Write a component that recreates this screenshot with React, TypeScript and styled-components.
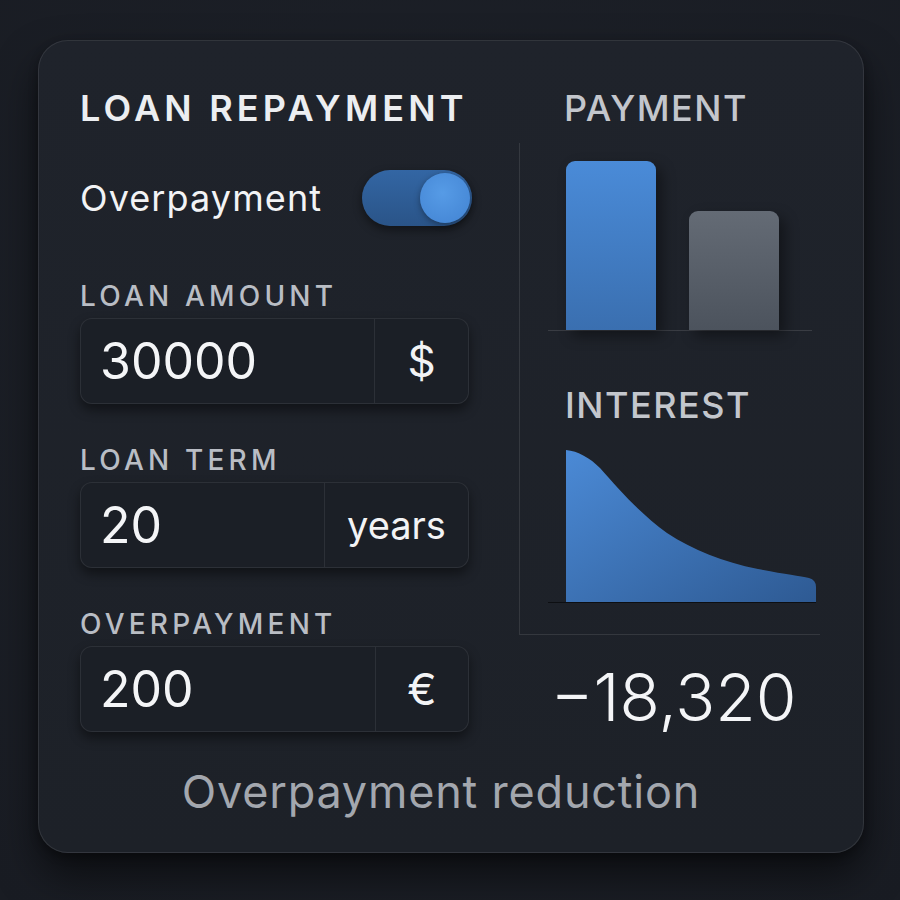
import * as React from 'react';
import styled, { createGlobalStyle } from 'styled-components';

const GlobalStyle = createGlobalStyle`
  html, body {
    margin: 0;
    padding: 0;
    background: #1a1e25;
  }
  body {
    font-family: Inter, "Noto Sans", "Liberation Sans", sans-serif;
    color: #eceef1;
    min-height: 900px;
  }
`;

const Page = styled.div({
  width: '900px',
  height: '900px',
  padding: '40px 36px 0 38px',
  boxSizing: 'border-box',
  background: 'radial-gradient(circle at 50% 40%, #1d2129 0%, #191c23 100%)',
});

const Card = styled.div({
  width: '826px',
  height: '813px',
  boxSizing: 'border-box',
  borderRadius: '30px',
  background: 'linear-gradient(180deg, #1f232b 0%, #1d2128 100%)',
  border: '1px solid rgba(255,255,255,0.09)',
  boxShadow: '0 22px 40px rgba(0,0,0,0.55), 0 4px 10px rgba(0,0,0,0.3)',
  padding: '47px 43px 0 41px',
  display: 'flex',
  flexDirection: 'column',
});

const Columns = styled.div({
  display: 'grid',
  gridTemplateColumns: '389px 301px',
  columnGap: '50px',
});

const LeftColumn = styled.div({
  display: 'flex',
  flexDirection: 'column',
});

const Title = styled.h1({
  margin: 0,
  fontSize: '36px',
  lineHeight: '40px',
  fontWeight: 600,
  letterSpacing: '4.2px',
  whiteSpace: 'nowrap',
  color: '#eceef1',
});

const ToggleRow = styled.div({
  marginTop: '42px',
  height: '56px',
  display: 'flex',
  alignItems: 'center',
  justifyContent: 'space-between',
  marginRight: '-3px',
});

const ToggleLabel = styled.span({
  fontSize: '36px',
  fontWeight: 400,
  letterSpacing: '1.1px',
  color: '#f2f3f5',
});

const Track = styled.div<{ on: boolean }>(({ on }) => ({
  width: '110px',
  height: '56px',
  borderRadius: '28px',
  background: on ? 'linear-gradient(180deg, #3366a4 0%, #2a5488 100%)' : '#3a3f48',
  boxShadow: '0 4px 10px rgba(0,0,0,0.45)',
  display: 'flex',
  alignItems: 'center',
  justifyContent: on ? 'flex-end' : 'flex-start',
  padding: '0 2px',
  boxSizing: 'border-box',
}));

const Knob = styled.div({
  width: '50px',
  height: '50px',
  borderRadius: '50%',
  background: 'radial-gradient(circle at 45% 40%, #569be6 0%, #4283d2 100%)',
  boxShadow: '0 2px 6px rgba(0,0,0,0.35)',
});

const Fields = styled.div({
  marginTop: '54px',
  display: 'flex',
  flexDirection: 'column',
  gap: '40px',
});

const Field = styled.div({
  display: 'flex',
  flexDirection: 'column',
  gap: '6px',
});

const FieldLabel = styled.label({
  fontSize: '28px',
  lineHeight: '32px',
  fontWeight: 500,
  letterSpacing: '4.2px',
  whiteSpace: 'nowrap',
  color: '#b9bdc4',
});

const InputBox = styled.div({
  height: '84px',
  display: 'flex',
  borderRadius: '12px',
  background: '#1b1f26',
  border: '1px solid rgba(255,255,255,0.08)',
  boxShadow: '0 6px 12px rgba(0,0,0,0.45)',
  overflow: 'hidden',
});

const InputValue = styled.div({
  flex: 1,
  display: 'flex',
  alignItems: 'center',
  paddingLeft: '19px',
  fontSize: '50px',
  fontWeight: 400,
  color: '#f4f5f7',
});

const Suffix = styled.div<{ width: number; size: number }>(({ width, size }) => ({
  width: `${width}px`,
  display: 'flex',
  alignItems: 'center',
  justifyContent: 'center',
  borderLeft: '1px solid rgba(255,255,255,0.08)',
  fontSize: `${size}px`,
  color: '#f2f3f5',
}));

const RightColumn = styled.div({
  display: 'flex',
  flexDirection: 'column',
  minWidth: 0,
});

const ChartTitle = styled.h2({
  margin: 0,
  paddingLeft: '45px',
  fontSize: '36px',
  lineHeight: '40px',
  fontWeight: 500,
  letterSpacing: '1.5px',
  color: '#c3c6cc',
});

const ChartPanel = styled.div({
  marginTop: '15px',
  height: '492px',
  boxSizing: 'border-box',
  borderLeft: '1px solid rgba(255,255,255,0.1)',
  borderBottom: '1px solid rgba(255,255,255,0.1)',
  display: 'flex',
  flexDirection: 'column',
});

const BarRow = styled.div({
  marginTop: '18px',
  marginLeft: '28px',
  width: '264px',
  height: '170px',
  paddingLeft: '18px',
  boxSizing: 'border-box',
  display: 'flex',
  alignItems: 'flex-end',
  gap: '33px',
  borderBottom: '1px solid rgba(255,255,255,0.12)',
});

const Bar = styled.div<{ tone: 'blue' | 'gray' }>(({ tone }) => ({
  width: '90px',
  borderRadius: '9px 9px 0 0',
  background: tone === 'blue'
    ? 'linear-gradient(180deg, #4a8bd8 0%, #3a6fb0 100%)'
    : 'linear-gradient(180deg, #646b75 0%, #4c535d 100%)',
  boxShadow: '6px 6px 14px rgba(0,0,0,0.4)',
}));

const InterestTitle = styled(ChartTitle)({
  marginTop: '54px',
});

const AreaChart = styled.svg({
  display: 'block',
  marginTop: '25px',
  marginLeft: '28px',
  overflow: 'visible',
});

const Result = styled.div({
  marginTop: '30px',
  textAlign: 'center',
  paddingLeft: '8px',
  fontSize: '66px',
  lineHeight: '64px',
  fontWeight: 300,
  letterSpacing: '0px',
  color: '#f4f5f7',
});

const Caption = styled.p({
  margin: '37px 0 0 0',
  paddingRight: '18px',
  textAlign: 'center',
  fontSize: '45px',
  lineHeight: '46px',
  fontWeight: 400,
  letterSpacing: '0.8px',
  color: '#a3a7ae',
});

const fields = [
  { label: 'LOAN AMOUNT', value: '30000', unit: '$', unitWidth: 93, unitSize: 44 },
  { label: 'LOAN TERM', value: '20', unit: 'years', unitWidth: 143, unitSize: 38 },
  { label: 'OVERPAYMENT', value: '200', unit: '€', unitWidth: 92, unitSize: 44 },
];

const InterestCurve: React.FC = () => (
  <AreaChart width={268} height={153} viewBox="0 0 268 153">
    <defs>
      <linearGradient id="interestFill" x1="0" y1="0" x2="1" y2="1">
        <stop offset="0%" stopColor="#4b8ad6" />
        <stop offset="100%" stopColor="#2e5a93" />
      </linearGradient>
    </defs>
    <path
      d="M18,152 V0 C30,1 42,8 52,18 C70,38 90,62 119,83 C145,100 175,112 210,119 C235,124 252,126 261,128 Q268,130 268,137 V152 Z"
      fill="url(#interestFill)"
    />
    <line x1="0" y1="152.5" x2="268" y2="152.5" stroke="rgba(0,0,0,0.55)" strokeWidth="1" />
  </AreaChart>
);

export default function App() {
  const [overpay, setOverpay] = React.useState(true);

  return (
    <Page>
      <GlobalStyle />
      <Card>
        <Columns>
          <LeftColumn>
            <Title>LOAN REPAYMENT</Title>
            <ToggleRow>
              <ToggleLabel>Overpayment</ToggleLabel>
              <Track on={overpay} onClick={() => setOverpay(!overpay)}>
                <Knob />
              </Track>
            </ToggleRow>
            <Fields>
              {fields.map((f) => (
                <Field key={f.label}>
                  <FieldLabel>{f.label}</FieldLabel>
                  <InputBox>
                    <InputValue>{f.value}</InputValue>
                    <Suffix width={f.unitWidth} size={f.unitSize}>{f.unit}</Suffix>
                  </InputBox>
                </Field>
              ))}
            </Fields>
          </LeftColumn>
          <RightColumn>
            <ChartTitle>PAYMENT</ChartTitle>
            <ChartPanel>
              <BarRow>
                <Bar tone="blue" style={{ height: '169px' }} />
                <Bar tone="gray" style={{ height: '119px' }} />
              </BarRow>
              <InterestTitle>INTEREST</InterestTitle>
              <InterestCurve />
            </ChartPanel>
            <Result>−18,320</Result>
          </RightColumn>
        </Columns>
        <Caption>Overpayment reduction</Caption>
      </Card>
    </Page>
  );
}
